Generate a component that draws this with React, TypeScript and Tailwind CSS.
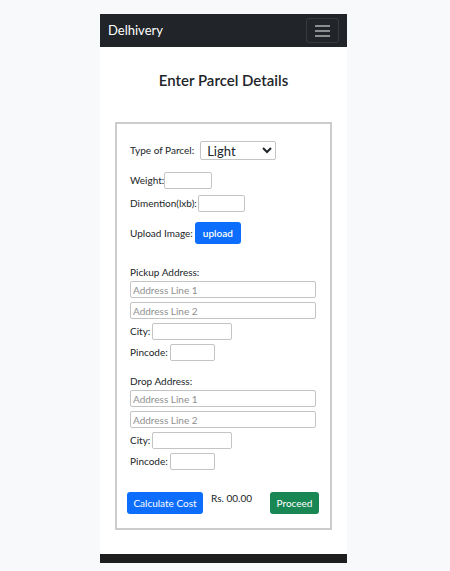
const font = { fontFamily: 'Lato, "Noto Sans", sans-serif' };

function Field({ w }: { w: string }) {
  return <input className={`${w} h-[17px] border border-[#c4c4c4] rounded-[2px] bg-white outline-none`} />;
}

function AddressBlock({ title, mt }: { title: string; mt: string }) {
  return (
    <div className={`${mt} flex flex-col`}>
      <span className="text-[10px] leading-[12px] text-[#212529]">{title}</span>
      <input
        placeholder="Address Line 1"
        className="mt-[3px] w-[186px] h-[17px] border border-[#c4c4c4] rounded-[2px] px-[2px] text-[10px] placeholder:text-[#8f8f8f] outline-none"
      />
      <input
        placeholder="Address Line 2"
        className="mt-[4px] w-[186px] h-[17px] border border-[#c4c4c4] rounded-[2px] px-[2px] text-[10px] placeholder:text-[#8f8f8f] outline-none"
      />
      <div className="mt-[4px] flex items-center gap-[2px] text-[10px] text-[#212529]">
        City: <Field w="w-[80px]" />
      </div>
      <div className="mt-[4px] flex items-center gap-[2px] text-[10px] text-[#212529]">
        Pincode: <Field w="w-[45px]" />
      </div>
    </div>
  );
}

export default function App() {
  return (
    <div className="w-full h-[571px] bg-[#f8f9fa] pl-[100px] pt-[14px]" style={font}>
      <div className="w-[247px] bg-white flex flex-col">
        <nav className="h-[33px] bg-[#212529] flex items-center justify-between pl-[8px] pr-[8px]">
          <span className="text-[13px] text-white">Delhivery</span>
          <button className="w-[33px] h-[25px] border border-[#ffffff1a] rounded-[3px] flex flex-col items-center justify-center gap-[3px]">
            <span className="w-[15px] h-[2px] bg-[#8c8e90]" />
            <span className="w-[15px] h-[2px] bg-[#8c8e90]" />
            <span className="w-[15px] h-[2px] bg-[#8c8e90]" />
          </button>
        </nav>

        <h2 className="mt-[23px] text-center text-[15px] leading-[20px] font-semibold text-[#212529]">
          Enter Parcel Details
        </h2>

        <div className="mt-[32px] mx-[15px] h-[408px] border-2 border-[#cccccc] pl-[13px] pr-[11px] text-[#212529]">
          <div className="mt-[17px] flex items-center text-[10px]">
            <span>Type of Parcel:</span>
            <select className="ml-[6px] w-[76px] h-[19px] border border-[#c4c4c4] rounded-[2px] text-[13px] leading-[15px] px-[2px] bg-white outline-none">
              <option>Light</option>
              <option>Medium</option>
              <option>Heavy</option>
            </select>
          </div>
          <div className="mt-[12px] flex items-center text-[10px]">
            <span>Weight:</span>
            <Field w="w-[48px]" />
          </div>
          <div className="mt-[6px] flex items-center text-[10px]">
            <span>Dimention(lxb):</span>
            <span className="ml-[1px]"><Field w="w-[47px]" /></span>
          </div>
          <div className="mt-[10px] flex items-center text-[10px]">
            <span>Upload Image:</span>
            <button className="ml-[2px] w-[46px] h-[22px] rounded-[3px] bg-[#0d6efd] text-white text-[10px] font-semibold">
              upload
            </button>
          </div>

          <AddressBlock title="Pickup Address:" mt="mt-[22px]" />
          <AddressBlock title="Drop Address:" mt="mt-[14px]" />

          <div className="mt-[22px] -ml-[3px] flex items-start">
            <button className="w-[76px] h-[22px] rounded-[3px] bg-[#0d6efd] text-white text-[10px]">
              Calculate Cost
            </button>
            <span className="ml-[8px] text-[10px] leading-[12px] text-[#212529]">Rs. 00.00</span>
            <button className="ml-auto w-[49px] h-[22px] rounded-[3px] bg-[#198754] text-white text-[10px]">
              Proceed
            </button>
          </div>
        </div>

        <div className="mt-[24px] h-[9px] bg-[#1e1e1e]" />
      </div>
    </div>
  );
}
